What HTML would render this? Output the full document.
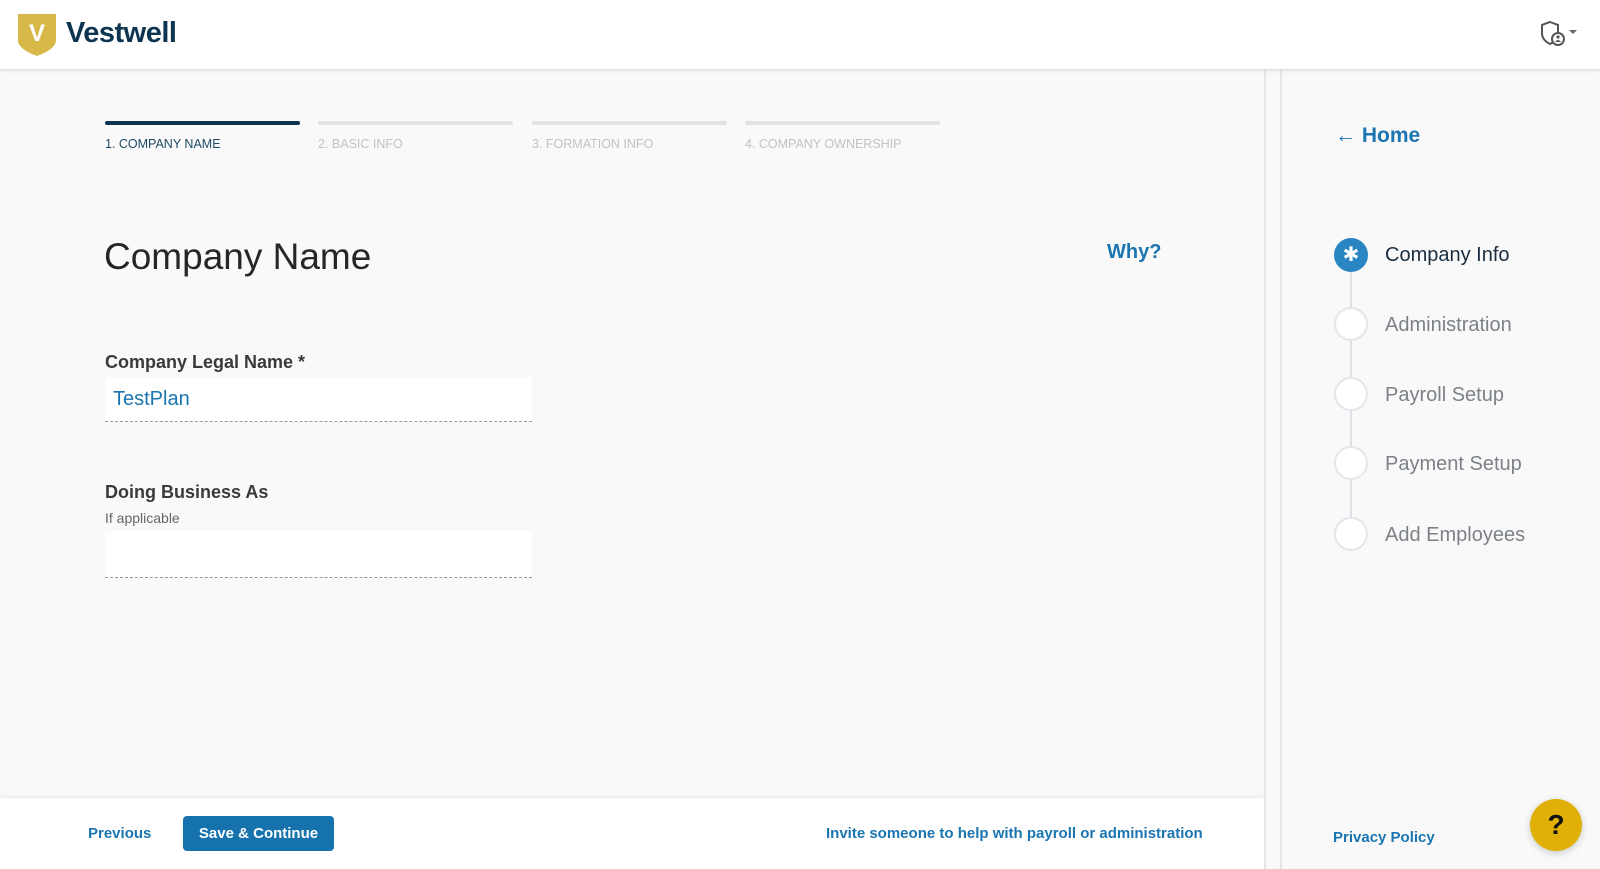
<!DOCTYPE html>
<html><head><style>
*{margin:0;padding:0;box-sizing:border-box}
body{width:1600px;height:869px;overflow:hidden;background:#f9f9f9;font-family:"Liberation Sans",sans-serif;position:relative}
.a{position:absolute;white-space:nowrap}
header{position:absolute;left:0;top:0;width:1600px;height:69px;background:#fff;box-shadow:0 1px 4px rgba(0,0,0,.15);z-index:2}
.bar{position:absolute;top:121px;height:4px;border-radius:2px;background:#e2e2e2;width:195px}
.sl{position:absolute;top:137px;font-size:12.5px;color:#c2c2c2}
.inp{position:absolute;left:105px;width:427px;background:#fff;border-bottom:1px dashed #999}
.c{position:absolute;left:1334px;width:34px;height:34px;border-radius:50%;border:2px solid #e3e6ea;background:#fff}
.st{position:absolute;left:1385px;font-size:20px;color:#7c8188}
</style></head><body>
<header>
<svg class="a" style="left:17px;top:12px" width="40" height="44" viewBox="0 0 40 44"><path d="M1 2 L39 2 L39 28 C39 36 28 41 20 44 C12 41 1 36 1 28 Z" fill="#d9b84a"/><text x="20" y="29" text-anchor="middle" font-family="Liberation Sans" font-weight="bold" font-size="24" fill="#fff">V</text></svg>
<div class="a" style="left:66px;top:17px;font-size:29px;font-weight:bold;color:#0d3550;letter-spacing:-0.5px">Vestwell</div>
<svg class="a" style="left:1540px;top:20px" width="40" height="30" viewBox="0 0 40 30"><path d="M10 2 L18 5 V13 C18 19 14 22 10 24 C6 22 2 19 2 13 V5 Z" fill="none" stroke="#555" stroke-width="2"/><circle cx="18" cy="19" r="6" fill="#fff" stroke="#555" stroke-width="2"/><circle cx="18" cy="17" r="1.6" fill="#555"/><path d="M15 22 Q18 18 21 22" fill="#555"/><path d="M29 10 L37 10 L33 14Z" fill="#666"/></svg>
</header>
<div class="bar" style="left:105px;background:#0d3550"></div>
<div class="bar" style="left:318px"></div>
<div class="bar" style="left:532px"></div>
<div class="bar" style="left:745px"></div>
<div class="sl" style="left:105px;color:#1f4a66">1. COMPANY NAME</div>
<div class="sl" style="left:318px">2. BASIC INFO</div>
<div class="sl" style="left:532px">3. FORMATION INFO</div>
<div class="sl" style="left:745px">4. COMPANY OWNERSHIP</div>
<div class="a" style="left:104px;top:236px;font-size:37px;color:#262626">Company Name</div>
<div class="a" style="left:1107px;top:241px;font-size:20px;font-weight:bold;color:#1b75b0">Why?</div>
<div class="a" style="left:105px;top:352px;font-size:18px;font-weight:bold;color:#3a3a3a">Company Legal Name *</div>
<div class="inp" style="top:377px;height:45px"><span class="a" style="left:8px;top:11px;font-size:20px;color:#1b75b0">TestPlan</span></div>
<div class="a" style="left:105px;top:482px;font-size:18px;font-weight:bold;color:#3a3a3a">Doing Business As</div>
<div class="a" style="left:105px;top:510px;font-size:14px;color:#666">If applicable</div>
<div class="inp" style="top:531px;height:47px"></div>
<div class="a" style="left:0;top:798px;width:1264px;height:71px;background:#fff;box-shadow:0 -1px 3px rgba(0,0,0,.08)"></div>
<div class="a" style="left:88px;top:825px;font-size:15px;font-weight:bold;color:#1b75b0">Previous</div>
<div class="a" style="left:183px;top:816px;width:151px;height:35px;background:#1672ad;border-radius:4px;color:#fff;font-size:15px;font-weight:bold;text-align:center;line-height:35px">Save &amp; Continue</div>
<div class="a" style="left:826px;top:825px;font-size:15px;font-weight:bold;color:#1b75b0">Invite someone to help with payroll or administration</div>
<div class="a" style="left:1264px;top:69px;width:2px;height:800px;background:#e6e6e6"></div>
<div class="a" style="left:1280px;top:69px;width:2px;height:800px;background:#e6e6e6"></div>
<div class="a" style="left:1335px;top:124px;font-size:21px;font-weight:bold;color:#1b75b0">← Home</div>
<div class="a" style="left:1350px;top:272px;width:2px;height:250px;background:#dde1e5"></div>
<div class="c" style="top:238px;background:#2a86c2;border-color:#2a86c2;color:#fff;font-size:20px;text-align:center;line-height:31px">✱</div>
<div class="c" style="top:307px"></div>
<div class="c" style="top:377px"></div>
<div class="c" style="top:446px"></div>
<div class="c" style="top:517px"></div>
<div class="st" style="top:244px;color:#1b2e40">Company Info</div>
<div class="st" style="top:314px">Administration</div>
<div class="st" style="top:384px">Payroll Setup</div>
<div class="st" style="top:453px">Payment Setup</div>
<div class="st" style="top:524px">Add Employees</div>
<div class="a" style="left:1333px;top:829px;font-size:15px;font-weight:bold;color:#1b75b0">Privacy Policy</div>
<div class="a" style="left:1530px;top:799px;width:52px;height:52px;border-radius:50%;background:#e0b008;box-shadow:0 2px 8px rgba(0,0,0,.2);text-align:center;line-height:52px;font-size:28px;font-weight:bold;color:#111">?</div>
</body></html>
